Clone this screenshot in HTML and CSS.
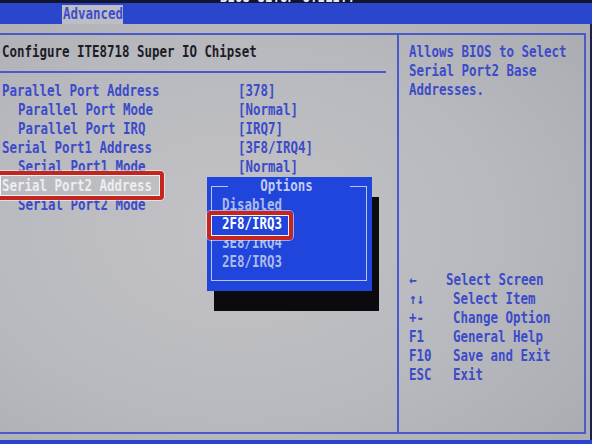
FILE: index.html
```html
<!DOCTYPE html>
<html lang="en">
<head>
<meta charset="utf-8">
<title>BIOS Setup Utility - Advanced</title>
<link rel="stylesheet" href="styles.css">
</head>
<body>
<div class="screen">
  <header class="titlebar">
    <div class="titlebar-text"><span class="t">BIOS SETUP UTILITY</span></div>
  </header>
  <nav class="menubar">
    <div class="tab"><span class="t">Advanced</span></div>
  </nav>

  <main class="main">
    <div class="frame">
      <section class="panel panel-left">
        <div class="heading"><span class="t">Configure ITE8718 Super IO Chipset</span></div>
        <hr class="sep">
        <ul class="items">
          <li class="item"><span class="label"><span class="t">Parallel Port Address</span></span><span class="value"><span class="t">[378]</span></span></li>
          <li class="item sub"><span class="label"><span class="t">Parallel Port Mode</span></span><span class="value"><span class="t">[Normal]</span></span></li>
          <li class="item sub"><span class="label"><span class="t">Parallel Port IRQ</span></span><span class="value"><span class="t">[IRQ7]</span></span></li>
          <li class="item"><span class="label"><span class="t">Serial Port1 Address</span></span><span class="value"><span class="t">[3F8/IRQ4]</span></span></li>
          <li class="item sub"><span class="label"><span class="t">Serial Port1 Mode</span></span><span class="value"><span class="t">[Normal]</span></span></li>
          <!-- values of the next two rows sit under the open option picker -->
          <li class="item current"><span class="label"><span class="t">Serial Port2 Address</span></span><span class="value"></span></li>
          <li class="item sub"><span class="label"><span class="t">Serial Port2 Mode</span></span><span class="value"></span></li>
        </ul>
      </section>

      <aside class="panel panel-right">
        <div class="help">
          <div><span class="t">Allows BIOS to Select</span></div>
          <div><span class="t">Serial Port2 Base</span></div>
          <div><span class="t">Addresses.</span></div>
        </div>
        <dl class="keys">
          <dt><span class="t">←</span></dt><dd class="shift"><span class="t">Select Screen</span></dd>
          <dt><span class="t">↑↓</span></dt><dd><span class="t">Select Item</span></dd>
          <dt><span class="t">+-</span></dt><dd><span class="t">Change Option</span></dd>
          <dt><span class="t">F1</span></dt><dd><span class="t">General Help</span></dd>
          <dt><span class="t">F10</span></dt><dd><span class="t">Save and Exit</span></dd>
          <dt><span class="t">ESC</span></dt><dd><span class="t">Exit</span></dd>
        </dl>
      </aside>
    </div>
  </main>
  <footer class="footer"></footer>

  <!-- option picker for the current item -->
  <div class="popup">
    <div class="popup-frame">
      <div class="popup-title"><span class="t">Options</span></div>
      <ul class="options">
        <li><span class="t">Disabled</span></li>
        <li class="chosen"><span class="t">2F8/IRQ3</span></li>
        <li><span class="t">3E8/IRQ4</span></li>
        <li><span class="t">2E8/IRQ3</span></li>
      </ul>
    </div>
  </div>

  <!-- red callouts -->
  <div class="mark mark-item"></div>
  <div class="mark mark-option"></div>
</div>
</body>
</html>
```

FILE: styles.css
```css
* {
  box-sizing: border-box;
  margin: 0;
  padding: 0;
}

html,
body {
  width: 592px;
  height: 444px;
  overflow: hidden;
  background: #101430;
}

body {
  font-family: "DejaVu Sans Mono", "Liberation Mono", monospace;
  font-size: 15px;
  font-weight: 700;
  line-height: 19px;
  color: #3c4bc8;
}

.screen {
  position: relative;
  width: 592px;
  height: 444px;
  overflow: hidden;
}

/* narrow text-mode glyphs: 7.5px cells */
.t {
  display: inline-block;
  vertical-align: top;
  white-space: pre;
  transform: scaleX(0.83);
  transform-origin: 0 0;
}

/* ---------- top bars ---------- */
.titlebar {
  height: 3px;
  overflow: hidden;
  background: #11152e;
  color: #e8eaf4;
  padding-left: 220px;
}

.titlebar-text {
  margin-top: -12px;
}

.menubar {
  height: 21px;
  background: #2a46cc;
  padding: 2px 0 0 62px;
}

.tab {
  width: 61px;
  height: 19px;
  padding-left: 1px;
  background: #bdbec5;
  color: #3d4dca;
}

/* ---------- main area ---------- */
.main {
  height: 416px;
  padding-top: 9px;
  border-right: 2px solid #1a2150;
  background: radial-gradient(ellipse 75% 75% at 40% 50%, #c2c2c6 0%, #b8b9be 60%, #acadb3 100%);
}

.frame {
  display: flex;
  width: 590px;
  height: 401px;
  margin-left: -4px;
  border: 2px solid #4b5acb;
}

.panel-left {
  flex: 0 0 401px;
  width: 401px;
  padding: 8px 0 0 4px;
  border-right: 2px solid #4b5acb;
}

.heading {
  color: #1d1d27;
}

.sep {
  width: 388px;
  height: 2px;
  margin: 9px 0 9px -4px;
  border: 0;
  background: #4b5acb;
}

.items {
  list-style: none;
}

.item {
  display: flex;
  height: 19px;
}

.label {
  display: block;
  width: 236px;
  flex: 0 0 236px;
}

.item.sub .label {
  padding-left: 16px;
}

.item.current .label {
  color: #ededf1;
}

.value {
  display: block;
}

.panel-right {
  flex: 1 1 0;
  min-width: 0;
  padding: 8px 0 0 10px;
}

.keys {
  display: grid;
  grid-template-columns: 44px auto;
  margin-top: 171px;
}

.keys dd.shift {
  margin-left: -7px;
}

.footer {
  height: 4px;
  background: #2a45cd;
}

/* ---------- option picker ---------- */
.popup {
  position: absolute;
  left: 207px;
  top: 177px;
  width: 165px;
  height: 114px;
  padding: 9px 5px 10px 4px;
  background: #1f45dc;
  box-shadow: 7px 20px 0 #0b0b0f;
}

.popup-frame {
  position: relative;
  height: 100%;
  padding: 9px 0 0 10px;
  border: 1px solid #b9c4f0;
}

.popup-title {
  position: absolute;
  left: 16px;
  top: -10px;
  width: 122px;
  text-align: center;
  background: #1f45dc;
  color: #c3cbf2;
}

.popup-title .t {
  transform-origin: 50% 0;
  margin-left: -5px;
}

.options {
  list-style: none;
  color: #adbaea;
}

.options li {
  height: 19px;
}

.options li.chosen {
  color: #ffffff;
}

/* ---------- callouts ---------- */
.mark {
  position: absolute;
  border: 4px solid #c4251e;
  border-radius: 4px;
  box-shadow: inset 0 0 0 1px #f3f3f3, 0 0 0 1px rgba(255, 255, 255, 0.55);
}

.mark-item {
  left: -4px;
  top: 171px;
  width: 168px;
  height: 29px;
}

.mark-option {
  left: 207px;
  top: 211px;
  width: 86px;
  height: 29px;
}
```
